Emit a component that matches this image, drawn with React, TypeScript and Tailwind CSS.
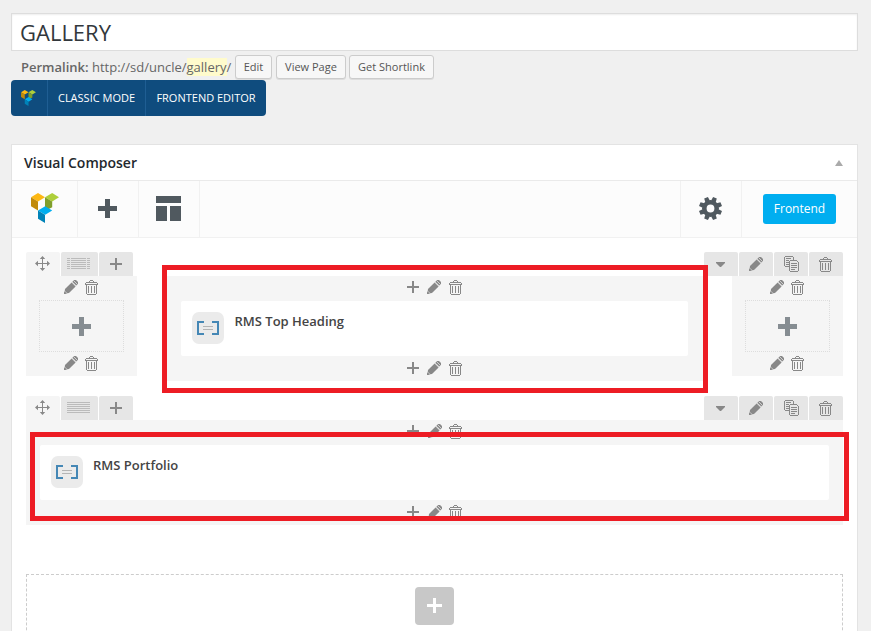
import type { ReactNode } from 'react';

function Logo({ className }: { className: string }) {
  return (
    <svg viewBox="0 0 28 30" className={className}>
      <path d="M0 4.2 7 0l7 4.2-7 4.4z" fill="#fdb813" />
      <path d="M0 4.2 7 8.6v8.8L0 13.2z" fill="#c08a0c" />
      <path d="M14 4.2 21.2 0 28 4.2l-6.8 4.4z" fill="#aecf3b" />
      <path d="M14 4.2 21.2 8.6v5.6L14 18z" fill="#7f9e2b" />
      <path d="M7 17.4l7.2-4.2 7 4.2-7 4.4z" fill="#00aeef" />
      <path d="M7 17.4l7 4.4V30l-7-4.2z" fill="#0083b8" />
    </svg>
  );
}

function Pencil({ className = '' }: { className?: string }) {
  return (
    <svg viewBox="0 0 14 14" className={`h-[14px] w-[14px] shrink-0 ${className}`} fill="#888">
      <path d="M1 9 7.6 2.4l4 4L5 13l-1.8.2L1.4 14H0v-1.4l.8-1.8z" />
      <path d="M8.2 2 10.2 0H12l2 2v1.8l-2 2z" />
      <path d="M8.6 2.3l3.2 3.2M10 1l3 3" stroke="#eee" strokeWidth=".7" fill="none" />
      <path d="M.9 11.2l1.8 1.8" stroke="#eee" strokeWidth=".6" fill="none" />
    </svg>
  );
}

function Trash({ className = '' }: { className?: string }) {
  return (
    <svg viewBox="0 0 13 15" className={`h-[15px] w-[13px] shrink-0 ${className}`} fill="#888" shapeRendering="crispEdges">
      <path d="M5 0h3v1H5zM4 1h1v1H4zM8 1h1v1H8zM1 2h11v1H1zM0 3h1v1H0zM12 3h1v1h-1zM0 4h13v1H0zM1 5h1v9H1zM11 5h1v9h-1zM2 14h9v1H2zM3 6h1v7H3zM6 6h1v7H6zM9 6h1v7H9z" />
    </svg>
  );
}

function Copy() {
  return (
    <svg viewBox="0 0 15 16" className="h-4 w-[15px]" fill="#888" shapeRendering="crispEdges">
      <path d="M1 0h8v1H1zM0 1h1v9H0zM1 10h4v1H1zM9 1h1v2H9zM2 2h5v1H2zM2 4h3v1H2zM2 6h3v1H2zM2 8h3v1H2z" />
      <path d="M6 4h7v1H6zM5 5h1v10H5zM6 15h8v1H6zM14 6h1v9h-1zM13 5h1v1h-1zM9 3h1v1H9zM7 7h6v1H7zM7 9h6v1H7zM7 11h6v1H7zM7 13h4v1H7z" />
    </svg>
  );
}

function Move() {
  return (
    <svg viewBox="0 0 15 15" className="h-[15px] w-[15px]" fill="#888">
      <path d="M7 2h1v11H7zM2 7h11v1H2z" />
      <path d="M7.5 0 10.2 3H4.8zM7.5 15 4.8 12h5.4zM0 7.5 3 4.8v5.4zM15 7.5l-3 2.7V4.8z" />
    </svg>
  );
}

function ThinPlus({ className = '' }: { className?: string }) {
  return (
    <svg viewBox="0 0 12 12" className={`h-3 w-3 shrink-0 ${className}`} fill="#888">
      <path d="M5 0h2v12H5zM0 5h12v2H0z" />
    </svg>
  );
}

function BoldPlus({ className }: { className: string }) {
  return (
    <svg viewBox="0 0 19 19" className={`h-[19px] w-[19px] ${className}`} fill="currentColor">
      <path d="M7 0h5v19H7zM0 7h19v5H0z" />
    </svg>
  );
}

const teeth = [22.5, 67.5, 112.5, 157.5, 202.5, 247.5, 292.5, 337.5];

function Gear() {
  return (
    <svg viewBox="-11.5 -11.5 23 23" className="h-[23px] w-[23px]">
      <circle r="6.2" fill="none" stroke="#50595f" strokeWidth="4.6" />
      {teeth.map((a) => (
        <path key={a} d="M-2.4-7.6-2-11.6h4l.4 4z" transform={`rotate(${a})`} fill="#50595f" />
      ))}
    </svg>
  );
}

function LayoutLines({ split }: { split: boolean }) {
  return (
    <svg viewBox="0 0 23 11" className="h-[11px] w-[23px]" fill="#bbb" shapeRendering="crispEdges">
      {[0, 2, 4, 6, 8, 10].map((y) => (
        <path key={y} d={split ? `M0 ${y}h3v1H0zM4 ${y}h15v1H4zM20 ${y}h3v1h-3z` : `M0 ${y}h23v1H0z`} />
      ))}
    </svg>
  );
}

function Tab({ children, className }: { children: ReactNode; className: string }) {
  return <div className={`flex h-6 items-start rounded-t-[2px] ${className}`}>{children}</div>;
}

function RowTabs({ split }: { split: boolean }) {
  return (
    <div className="flex h-6 justify-between">
      <div className="flex gap-px">
        <Tab className="w-[34px] bg-[#f5f5f5] pt-1 pl-[9px]"><Move /></Tab>
        <Tab className="w-[37px] bg-[#e6e6e6] pt-1.5 pl-1.5"><LayoutLines split={split} /></Tab>
        <Tab className="w-[34px] bg-[#e6e6e6] pt-1.5 pl-[11px]"><ThinPlus /></Tab>
      </div>
      <div className="flex gap-px">
        <Tab className="w-[34px] bg-[#e6e6e6] pt-2.5 pl-3">
          <svg viewBox="0 0 9 5" className="h-[5px] w-[9px]" fill="#888"><path d="M0 0h9v1L5 5H4L0 1z" /></svg>
        </Tab>
        <Tab className="w-[34px] bg-[#e6e6e6] pt-[5px] pl-2.5"><Pencil /></Tab>
        <Tab className="w-[34px] bg-[#e6e6e6] pt-1 pl-2.5"><Copy /></Tab>
        <Tab className="w-[34px] bg-[#e6e6e6] pt-[5px] pl-2.5"><Trash /></Tab>
      </div>
    </div>
  );
}

function EmptyColumn() {
  return (
    <div className="h-[100px] w-[111px] bg-[#f5f5f5]">
      <div className="flex h-6 items-start gap-[7px] pt-1 pl-[38px]"><Pencil /><Trash /></div>
      <div className="mx-[13px] flex h-[52px] items-center justify-center border border-dotted border-[#ddd]">
        <BoldPlus className="text-[#868d92]" />
      </div>
      <div className="flex h-6 items-start gap-[7px] pt-1 pl-[38px]"><Pencil /><Trash /></div>
    </div>
  );
}

function ColumnControls({ className, wide }: { className: string; wide: boolean }) {
  return (
    <div className={`flex items-start ${className}`}>
      <ThinPlus className="mt-px" />
      <Pencil className={wide ? 'ml-[9px]' : 'ml-2'} />
      <Trash className={wide ? 'ml-[7px]' : 'ml-2'} />
    </div>
  );
}

function Element({ title, className, titleClass }: { title: string; className: string; titleClass: string }) {
  return (
    <div className={`flex h-[55px] items-start rounded-[2px] bg-white pt-[11px] pl-[11px] ${className}`}>
      <div className="flex h-8 w-8 items-start rounded-[7px] bg-[#ebebeb] pt-[9px] pl-[5px]">
        <svg viewBox="0 0 22 14" className="h-[14px] w-[22px]">
          <path d="M7 1H1v12h6M15 1h6v12h-6" fill="none" stroke="#4587b5" strokeWidth="2" />
          <path d="M6 5h10v1H6zM6 8h10v1H6z" fill="#b5b5b5" />
        </svg>
      </div>
      <span className={`whitespace-nowrap text-[13px] leading-[19px] font-semibold text-[#444] ${titleClass}`}>{title}</span>
    </div>
  );
}

function SmallButton({ children, className }: { children: ReactNode; className: string }) {
  return (
    <button className={`h-6 rounded-[3px] border border-[#ccc] bg-[#f7f7f7] text-center text-[11px] leading-[22px] whitespace-nowrap text-[#555] shadow-[0_1px_0_rgba(0,0,0,0.08)] ${className}`}>
      {children}
    </button>
  );
}

export default function App() {
  return (
    <div className="relative h-[631px] w-[871px] overflow-hidden bg-[#f0f0f0] pt-[13px] pl-[11px] font-['Open_Sans',sans-serif]">
      <div className="h-[38px] w-[847px] border border-[#ddd] bg-white pl-2 text-[22px] leading-[36px] text-[#32373c] shadow-[inset_0_1px_2px_rgba(0,0,0,0.07)]">
        GALLERY
      </div>
      <div className="flex h-[29px] items-start pt-1 pl-[10px]">
        <div className="w-[214px] whitespace-nowrap text-[13px] leading-6 text-[#666]">
          <span className="font-semibold">Permalink:</span> http://sd/uncle/<span className="bg-[#fffbcc]">gallery</span>/
        </div>
        <SmallButton className="w-[37px]">Edit</SmallButton>
        <SmallButton className="ml-1 w-[70px]">View Page</SmallButton>
        <SmallButton className="ml-[3px] w-[85px]">Get Shortlink</SmallButton>
      </div>
      <div className="flex h-9 w-[255px] rounded-[4px] bg-[#0f4c7e] text-[11px] leading-9 whitespace-nowrap text-white">
        <div className="w-9 pt-2.5 pl-2.5"><Logo className="h-[16px] w-[15px]" /></div>
        <div className="w-[98px] border-l border-[#1f5e93] text-center">CLASSIC MODE</div>
        <div className="w-[121px] border-l border-[#1f5e93] text-center">FRONTEND EDITOR</div>
      </div>

      <div className="mt-7 h-[520px] w-[847px] border border-[#e3e3e3] bg-white">
        <div className="flex h-9 items-center justify-between border-b border-[#eaeaea] pr-[14px] pl-3">
          <span className="text-[14px] font-semibold text-[#23282d]">Visual Composer</span>
          <svg viewBox="0 0 8 6" className="h-1.5 w-2" fill="#aaa"><path d="M4 0l4 6H0z" /></svg>
        </div>
        <div className="flex h-[57px] border-b border-[#f1f1f1] bg-[#fcfcfc]">
          <div className="w-[66px] border-r border-[#f1f1f1] pt-3 pl-[19px]"><Logo className="h-[30px] w-7" /></div>
          <div className="w-[61px] border-r border-[#f1f1f1] pt-[18px] pl-5"><BoldPlus className="text-[#50595f]" /></div>
          <div className="w-[61px] border-r border-[#f1f1f1] pt-[15px] pl-[17px]">
            <svg viewBox="0 0 25 25" className="h-[25px] w-[25px]" fill="#50595f"><path d="M0 0h25v7H0zM0 10h11v15H0zM14 10h11v15H14z" /></svg>
          </div>
          <div className="ml-auto w-[62px] border-x border-[#f1f1f1] pt-4 pl-[18px]"><Gear /></div>
          <div className="w-[115px] pt-[13px] pl-[21px]">
            <button className="h-[30px] w-[73px] rounded-[3px] bg-[#00aef0] text-[12px] leading-[30px] text-white">Frontend</button>
          </div>
        </div>

        <div className="px-[14px] pt-[14px]">
          <div className="h-36">
            <RowTabs split />
            <div className="flex items-start justify-between">
              <EmptyColumn />
              <div className="h-[105px] w-[536px] bg-[#f5f5f5]">
                <ColumnControls className="h-[25px] pt-1 pl-[240px]" wide={false} />
                <Element title="RMS Top Heading" className="mr-[15px] ml-[14px]" titleClass="ml-[11px]" />
                <ColumnControls className="h-[25px] pt-[5px] pl-[240px]" wide={false} />
              </div>
              <EmptyColumn />
            </div>
          </div>
          <div className="h-[178px]">
            <RowTabs split={false} />
            <div className="h-[105px] bg-[#f5f5f5]">
              <ColumnControls className="h-[25px] pt-1 pl-[381px]" wide />
              <Element title="RMS Portfolio" className="mx-[14px]" titleClass="ml-[10px]" />
              <ColumnControls className="h-[25px] pt-[5px] pl-[381px]" wide />
            </div>
          </div>
          <div className="flex h-[66px] justify-center border border-dashed border-[#ccc] pt-3">
            <div className="flex h-[38px] w-[39px] items-start rounded-[4px] bg-[#c8c8c8] pt-[11px] pl-3">
              <svg viewBox="0 0 15 15" className="h-[15px] w-[15px]" fill="#fff"><path d="M6 0h3v15H6zM0 6h15v3H0z" /></svg>
            </div>
          </div>
        </div>
      </div>

      <div className="absolute top-[265px] left-[162px] h-[128px] w-[546px] border-[5px] border-[#ed1c24]" />
      <div className="absolute top-[432px] left-[30px] h-[89px] w-[819px] border-[5px] border-[#ed1c24]" />
    </div>
  );
}
